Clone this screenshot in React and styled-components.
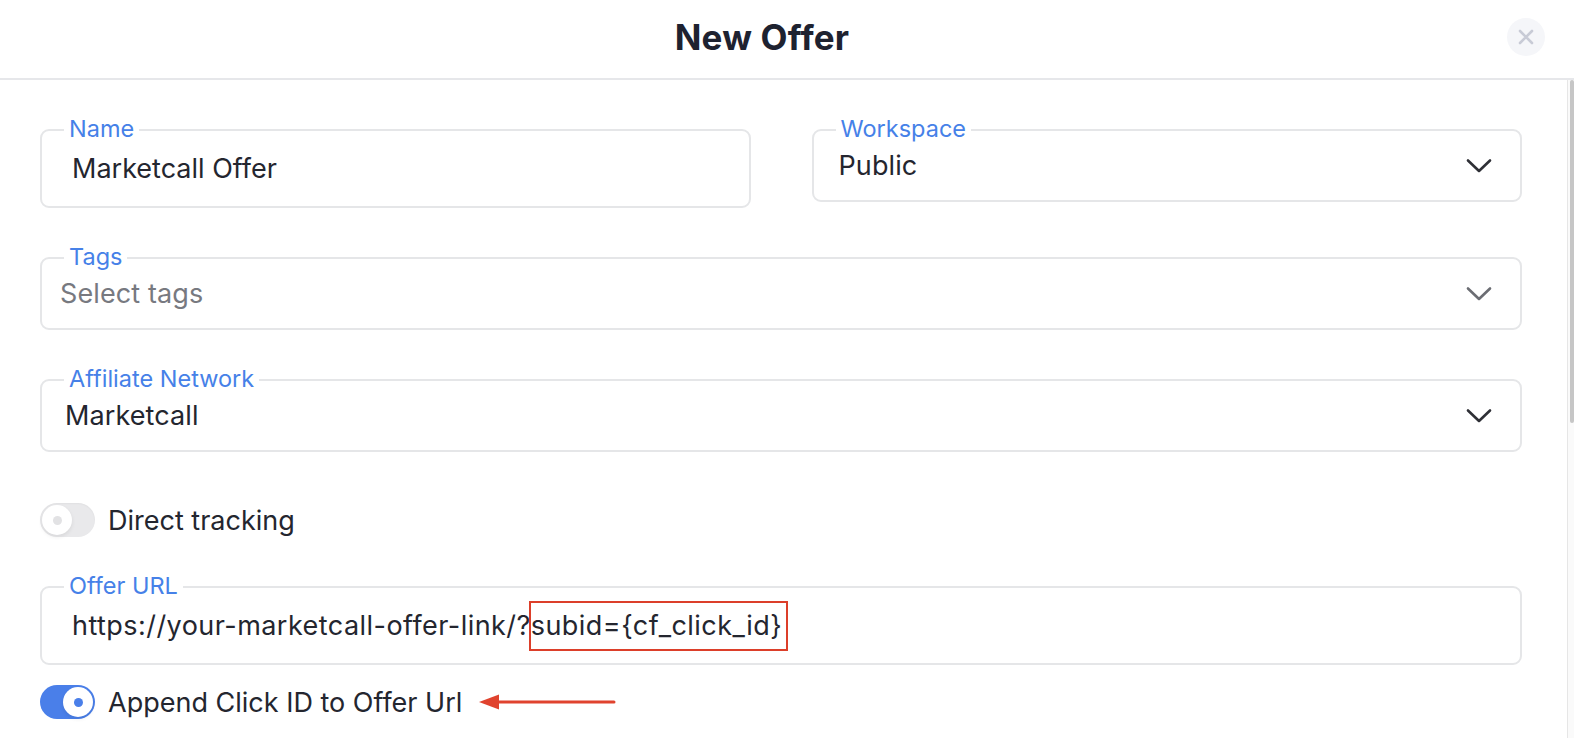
import React from 'react';
import styled, { createGlobalStyle } from 'styled-components';

const GlobalStyle = createGlobalStyle`
  html, body {
    margin: 0;
    padding: 0;
    background: #ffffff;
    overflow: hidden;
  }
  body {
    font-family: Inter, "Noto Sans", "Liberation Sans", sans-serif;
    color: #24262f;
  }
  * {
    box-sizing: border-box;
  }
`;

const Page = styled.div`
  display: flex;
  flex-direction: column;
  height: 100vh;
`;

const Header = styled.header`
  height: 80px;
  flex-shrink: 0;
  display: flex;
  align-items: center;
  border-bottom: 2px solid #e6e7ea;
`;

const Title = styled.h1`
  flex: 1;
  margin: 0 0 4px;
  padding-left: 17px;
  text-align: center;
  font-size: 35px;
  font-weight: 700;
  color: #1e2230;
  letter-spacing: 0.2px;
`;

const CloseButton = styled.button`
  margin: 0 29px 4px 0;
  width: 38px;
  height: 38px;
  border: none;
  border-radius: 50%;
  background: #f5f6f9;
  display: flex;
  align-items: center;
  justify-content: center;
  padding: 0;
  cursor: pointer;
`;

const Body = styled.div`
  flex: 1;
  display: flex;
  min-height: 0;
`;

const Content = styled.main`
  flex: 1;
  padding: 49px 45px 0 40px;
  display: flex;
  flex-direction: column;
`;

const ScrollTrack = styled.div`
  width: 7px;
  flex-shrink: 0;
  border-left: 1px solid #e6e6e6;
  background: #fafafa;
  display: flex;
  justify-content: flex-end;
`;

const ScrollThumb = styled.div`
  width: 4px;
  height: 343px;
  background: #c6c6c6;
  border-radius: 2px;
`;

const Row = styled.div`
  display: grid;
  grid-template-columns: 1fr 1fr;
  column-gap: 61px;
  align-items: start;
`;

const Field = styled.div`
  position: relative;
  height: ${(p) => p.$height}px;
  margin-top: ${(p) => p.$mt || 0}px;
  border: 2px solid #e5e6e8;
  border-radius: 9px;
  display: flex;
  align-items: center;
  padding: 0 28px 0 ${(p) => p.$padLeft}px;
`;

const FloatLabel = styled.span`
  position: absolute;
  top: -16px;
  left: 22px;
  padding: 0 5px;
  background: #ffffff;
  font-size: 23.5px;
  line-height: 28px;
  color: #4681e8;
`;

const Value = styled.span`
  flex: 1;
  font-size: 27px;
  line-height: 32px;
  letter-spacing: ${(p) => p.$spacing ?? 0.1}px;
  white-space: nowrap;
  color: ${(p) => (p.$placeholder ? '#777980' : '#24262f')};
`;

const Highlight = styled.span`
  display: inline-block;
  line-height: 46px;
  padding-right: 4px;
  outline: 2px solid #dc3f2a;
  outline-offset: 0;
`;

const ToggleRow = styled.label`
  display: flex;
  align-items: center;
  gap: 13px;
  margin-top: ${(p) => p.$mt}px;
  font-size: 27px;
  color: #24262f;
`;

const Switch = styled.span`
  position: relative;
  width: 55px;
  height: 34px;
  flex-shrink: 0;
  border-radius: 17px;
  background: ${(p) => (p.$on ? '#4a7fe9' : '#e9e9eb')};
  box-shadow: ${(p) => (p.$on ? 'none' : 'inset 0 1px 2px rgba(0,0,0,0.04)')};
`;

const Knob = styled.span`
  position: absolute;
  top: 2px;
  left: ${(p) => (p.$on ? 23 : 2)}px;
  width: 30px;
  height: 30px;
  border-radius: 50%;
  background: #ffffff;
  box-shadow: 0 2px 4px rgba(0, 0, 0, 0.08);
  display: flex;
  align-items: center;
  justify-content: center;

  &::after {
    content: '';
    width: 9px;
    height: 9px;
    border-radius: 50%;
    background: ${(p) => (p.$on ? '#4a7fe9' : '#e2e2e4')};
  }
`;

const Arrow = styled.svg`
  margin-left: 3px;
  flex-shrink: 0;
`;

const Chevron = ({ color }) => (
  <svg width="26" height="16" viewBox="0 0 26 16" fill="none">
    <path d="M2 2.5 L13 13 L24 2.5" stroke={color} strokeWidth="2.6" strokeLinecap="round" strokeLinejoin="round" />
  </svg>
);

const Toggle = ({ on, children }) => (
  <>
    <Switch $on={on}>
      <Knob $on={on} />
    </Switch>
    {children}
  </>
);

export default function App() {
  return (
    <Page>
      <GlobalStyle />
      <Header>
        <Title>New Offer</Title>
        <CloseButton aria-label="Close">
          <svg width="16" height="16" viewBox="0 0 16 16">
            <path d="M2 2 L14 14 M14 2 L2 14" stroke="#c8cbd6" strokeWidth="2.6" strokeLinecap="round" />
          </svg>
        </CloseButton>
      </Header>
      <Body>
        <Content>
          <Row>
            <Field $height={79} $padLeft={30}>
              <FloatLabel>Name</FloatLabel>
              <Value $spacing={0}>Marketcall Offer</Value>
            </Field>
            <Field $height={73} $padLeft={25}>
              <FloatLabel>Workspace</FloatLabel>
              <Value>Public</Value>
              <Chevron color="#2f3036" />
            </Field>
          </Row>
          <Field $height={73} $mt={49} $padLeft={18}>
            <FloatLabel>Tags</FloatLabel>
            <Value $placeholder>Select tags</Value>
            <Chevron color="#6b6d73" />
          </Field>
          <Field $height={73} $mt={49} $padLeft={23}>
            <FloatLabel>Affiliate Network</FloatLabel>
            <Value>Marketcall</Value>
            <Chevron color="#2f3036" />
          </Field>
          <ToggleRow $mt={51}>
            <Toggle on={false}>Direct tracking</Toggle>
          </ToggleRow>
          <Field $height={79} $mt={49} $padLeft={30}>
            <FloatLabel>Offer URL</FloatLabel>
            <Value $spacing={0.45}>
              https://your-marketcall-offer-link/?<Highlight>subid={'{'}cf_click_id{'}'}</Highlight>
            </Value>
          </Field>
          <ToggleRow $mt={20}>
            <Toggle on>Append Click ID to Offer Url</Toggle>
            <Arrow width="140" height="18" viewBox="0 0 140 18">
              <path d="M16 9 L136 9" stroke="#e0432e" strokeWidth="3" strokeLinecap="round" />
              <path d="M1 9 L21 1.5 L21 16.5 Z" fill="#e0432e" />
            </Arrow>
          </ToggleRow>
        </Content>
        <ScrollTrack>
          <ScrollThumb />
        </ScrollTrack>
      </Body>
    </Page>
  );
}
